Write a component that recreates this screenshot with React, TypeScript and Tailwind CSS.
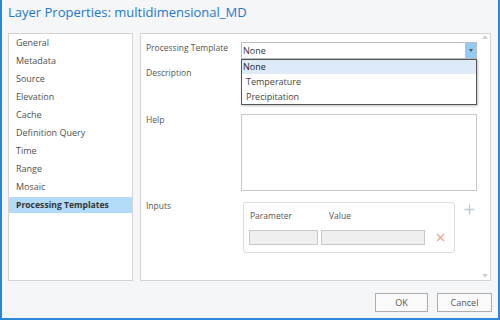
import React from "react";

const items = [
  "General",
  "Metadata",
  "Source",
  "Elevation",
  "Cache",
  "Definition Query",
  "Time",
  "Range",
  "Mosaic",
  "Processing Templates",
];

export default function App() {
  return (
    <div className="w-[500px] h-[320px] bg-[#f4f6f7] border-x-2 border-b-2 border-[#2b88d8] flex flex-col font-['Open_Sans',sans-serif] text-[#444]">
      {/* Title */}
      <div className="h-[33px] pl-[6px] pt-[2px] text-[13px] leading-[20px] text-[#1f78c8]">
        Layer Properties: multidimensional_MD
      </div>

      {/* Content */}
      <div className="flex h-[248px] pl-[6px] gap-[7px]">
        {/* Left nav */}
        <div className="w-[125px] bg-white border border-[#d4d4d4] flex flex-col">
          {items.map((it, i) => {
            const sel = i === items.length - 1;
            return (
              <div key={it} className="h-[18px] flex items-center">
                <div
                  className={
                    "w-full h-[16px] flex items-center pl-[7px] " +
                    (sel ? "bg-[#b2dbf8] font-bold text-[8.6px] text-[#333]" : "text-[9px] text-[#505050]")
                  }
                >
                  {it}
                </div>
              </div>
            );
          })}
        </div>

        {/* Right panel */}
        <div className="w-[351px] bg-white border border-[#d4d4d4] flex">
          <div className="flex-1 flex flex-col pl-[5px] pt-[8px] text-[8.5px] text-[#555]">
            {/* Processing template row */}
            <div className="flex h-[17px]">
              <div className="w-[95px] leading-[12px]">Processing Template</div>
              <div className="relative w-[236px] h-[17px] border border-[#bcbcbc] flex">
                <div className="flex-1 pl-[1px] text-[9px] text-[#333] leading-[15px]">None</div>
                <div className="w-[11px] h-full bg-[#92cbf5] flex items-center justify-center">
                  <div className="w-0 h-0 border-x-[2.5px] border-x-transparent border-t-[3px] border-t-[#555]" />
                </div>
                {/* Dropdown list */}
                <div className="absolute left-[-1px] top-[16px] w-[236px] h-[46px] bg-white border border-[#555] shadow-[1px_1px_2px_rgba(0,0,0,0.25)] flex flex-col text-[9px] text-[#444] z-10">
                  <div className="h-[14px] bg-[#ddebf8] pl-[1px] leading-[14px] text-[#222]">None</div>
                  <div className="h-[15px] pl-[4px] leading-[15px]">Temperature</div>
                  <div className="h-[15px] pl-[4px] leading-[15px]">Precipitation</div>
                </div>
              </div>
            </div>

            {/* Description */}
            <div className="flex mt-[8px] h-[41px]">
              <div className="w-[95px] leading-[12px]">Description</div>
            </div>

            {/* Help */}
            <div className="flex mt-[6px]">
              <div className="w-[95px] leading-[12px]">Help</div>
              <div className="w-[236px] h-[77px] border border-[#c8c8c8]" />
            </div>

            {/* Inputs */}
            <div className="flex mt-[9px]">
              <div className="w-[95px] leading-[12px]">Inputs</div>
              <div className="ml-[2px] mt-[2px] w-[212px] h-[51px] border border-[#dcdcdc] rounded-[3px] flex flex-col pl-[5px]">
                <div className="flex mt-[7px] h-[12px] leading-[12px]">
                  <div className="w-[80px] pl-[1px]">Parameter</div>
                  <div>Value</div>
                </div>
                <div className="flex items-center mt-[8px] gap-[3px]">
                  <div className="w-[69px] h-[15px] bg-[#efefef] border border-[#c8c8c8]" />
                  <div className="w-[104px] h-[15px] bg-[#efefef] border border-[#c8c8c8]" />
                  <svg width="9" height="9" viewBox="0 0 9 9" className="ml-[8px]">
                    <path d="M1 1L8 8M8 1L1 8" stroke="#e8a594" strokeWidth="1.4" />
                  </svg>
                </div>
              </div>
              <svg width="11" height="11" viewBox="0 0 11 11" className="ml-[9px] mt-[4px]">
                <path d="M5.5 0.5V10.5M0.5 5.5H10.5" stroke="#bfcad6" strokeWidth="1.3" />
              </svg>
            </div>
          </div>

          {/* Scrollbar */}
          <div className="w-[10px] flex flex-col items-center justify-between pt-[1px] pb-[2px]">
            <div className="w-0 h-0 border-x-[3px] border-x-transparent border-b-[4px] border-b-[#d0d0d0]" />
            <div className="w-0 h-0 border-x-[3px] border-x-transparent border-t-[4px] border-t-[#d0d0d0]" />
          </div>
        </div>
      </div>

      {/* Footer */}
      <div className="flex justify-end gap-[9px] pr-[6px] mt-[12px]">
        <button className="w-[53px] h-[19px] border border-[#adadad] bg-[#fafafa] text-[9px] text-[#555] leading-[17px]">
          OK
        </button>
        <button className="w-[55px] h-[19px] border border-[#adadad] bg-[#fafafa] text-[9px] text-[#555] leading-[17px]">
          Cancel
        </button>
      </div>
    </div>
  );
}
